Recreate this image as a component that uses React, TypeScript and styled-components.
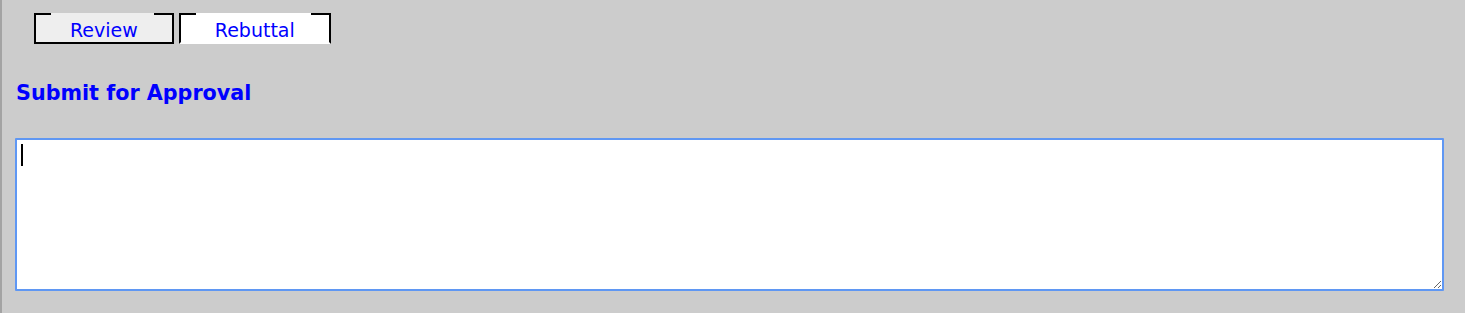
import React, { useState } from 'react';
import styled, { createGlobalStyle } from 'styled-components';

const GlobalStyle = createGlobalStyle`
  html, body {
    margin: 0;
    padding: 0;
    background: #cccccc;
  }
  body {
    font-family: "DejaVu Sans", Verdana, sans-serif;
  }
`;

const Page = styled.div`
  min-height: 100vh;
  box-sizing: border-box;
  background: #cccccc;
  border-left: 2px solid #a3a3a3;
  padding: 13px 21px 0 13px;
`;

const TabBar = styled.div`
  display: flex;
  gap: 5px;
  padding-left: 19px;
`;

const Tab = styled.button<{ $active?: boolean }>`
  position: relative;
  height: 31px;
  box-sizing: border-box;
  padding: 3px 34px 0;
  margin: 0;
  font: 19px/24px "DejaVu Sans", Verdana, sans-serif;
  color: #0000ff;
  cursor: pointer;
  background: ${p => (p.$active ? '#ffffff' : '#eeeeee')};
  border: 2px solid #000;
  border-top-color: ${p => (p.$active ? '#ffffff' : '#eeeeee')};
  border-bottom-color: ${p => (p.$active ? '#ffffff' : '#000')};

  &::before,
  &::after {
    content: '';
    position: absolute;
    top: -2px;
    height: 2px;
    background: #000;
  }
  &::before {
    left: -2px;
    width: 17px;
  }
  &::after {
    right: -2px;
    width: 20px;
  }
`;

const Heading = styled.h3`
  margin: 37px 0 0 1px;
  font: bold 20.7px "DejaVu Sans", Verdana, sans-serif;
  line-height: 24px;
  color: #0000ff;
`;

const Field = styled.div`
  position: relative;
  margin-top: 33px;
`;

const Notes = styled.textarea`
  display: block;
  width: 100%;
  height: 153px;
  box-sizing: border-box;
  padding: 2px 4px;
  border: 2px solid #5f97f3;
  border-radius: 1px;
  outline: none;
  background: #fff;
  font: 18.5px "DejaVu Sans", Verdana, sans-serif;
  color: #000;
  caret-color: #000;
`;

// drawn caret, the screenshot shows the empty field focused
const Caret = styled.span`
  position: absolute;
  left: 6px;
  top: 6px;
  width: 2px;
  height: 22px;
  background: #000;
  pointer-events: none;
`;

const tabs = ['Review', 'Rebuttal'];

const App: React.FC = () => {
  const [active, setActive] = useState('Rebuttal');
  const [text, setText] = useState('');

  return (
    <>
      <GlobalStyle />
      <Page>
        <TabBar>
          {tabs.map(t => (
            <Tab key={t} $active={t === active} onClick={() => setActive(t)}>
              {t}
            </Tab>
          ))}
        </TabBar>
        <Heading>Submit for Approval</Heading>
        <Field>
          <Notes value={text} onChange={e => setText(e.target.value)} />
          {text === '' && <Caret />}
        </Field>
      </Page>
    </>
  );
};

export default App;
